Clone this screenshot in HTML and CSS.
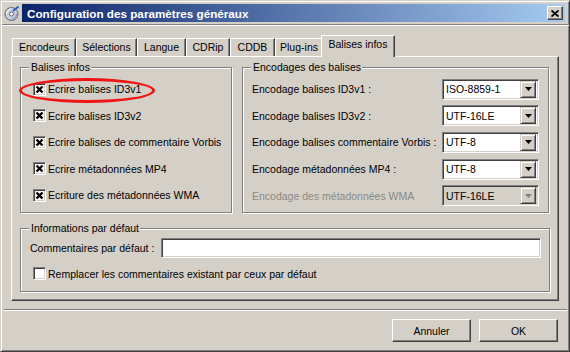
FILE: index.html
```html
<!DOCTYPE html>
<html lang="fr">
<head>
    <meta charset="UTF-8">
    <title>Configuration des paramètres généraux</title>
    <link rel="stylesheet" href="styles.css">
</head>
<body>
    <div class="window">
        <div class="titlebar">
            <div class="app-icon">
                <svg width="16" height="16" viewBox="0 0 16 16">
                    <circle cx="7.5" cy="9" r="6.5" fill="#c9cdd8" stroke="#5d6478"/>
                    <path d="M2.5 9a5 5 0 0 1 5-5" stroke="#ffffff" fill="none"/>
                    <path d="M12.5 9a5 5 0 0 1-5 5" stroke="#8890b0" fill="none"/>
                    <circle cx="7.5" cy="9" r="2" fill="#ffffff" stroke="#5d6478"/>
                    <path d="M9 6 L14.5 1.5" stroke="#2a5cd0" stroke-width="2"/>
                </svg>
            </div>
            <div class="caption">
                <span>Configuration des paramètres généraux</span>
                <div class="close">
                    <svg width="8" height="7" viewBox="0 0 8 7">
                        <path d="M0.5 0.5 L7.5 6.5 M7.5 0.5 L0.5 6.5" stroke="#000" stroke-width="1.8"/>
                    </svg>
                </div>
            </div>
        </div>
        <div class="rule"></div>

        <div class="main">
            <div class="tabs">
                <div class="tab tab-encoders">Encodeurs</div>
                <div class="tab tab-selections">Sélections</div>
                <div class="tab tab-language">Langue</div>
                <div class="tab tab-cdrip">CDRip</div>
                <div class="tab tab-cddb">CDDB</div>
                <div class="tab tab-plugins">Plug-ins</div>
                <div class="tab tab-tags active">Balises infos</div>
            </div>

            <div class="panel">
                <div class="top-row">
                    <div class="group group-tags">
                        <span class="legend">Balises infos</span>
                        <div class="check-list">
                            <div class="check"><span class="box checked"></span>Ecrire balises ID3v1</div>
                            <div class="check"><span class="box checked"></span>Ecrire balises ID3v2</div>
                            <div class="check"><span class="box checked"></span>Ecrire balises de commentaire Vorbis</div>
                            <div class="check"><span class="box checked"></span>Ecrire métadonnées MP4</div>
                            <div class="check"><span class="box checked"></span>Ecriture des métadonnées WMA</div>
                        </div>
                        <span class="highlight"></span>
                    </div>

                    <div class="group group-enc">
                        <span class="legend">Encodages des balises</span>
                        <div class="enc-list">
                            <div class="enc-row">
                                <span>Encodage balises ID3v1 :</span>
                                <div class="combo"><span class="combo-value">ISO-8859-1</span><span class="combo-btn"></span></div>
                            </div>
                            <div class="enc-row">
                                <span>Encodage balises ID3v2 :</span>
                                <div class="combo"><span class="combo-value">UTF-16LE</span><span class="combo-btn"></span></div>
                            </div>
                            <div class="enc-row">
                                <span>Encodage balises commentaire Vorbis :</span>
                                <div class="combo"><span class="combo-value">UTF-8</span><span class="combo-btn"></span></div>
                            </div>
                            <div class="enc-row">
                                <span>Encodage métadonnées MP4 :</span>
                                <div class="combo"><span class="combo-value">UTF-8</span><span class="combo-btn"></span></div>
                            </div>
                            <div class="enc-row disabled">
                                <span>Encodage des métadonnées WMA</span>
                                <div class="combo"><span class="combo-value">UTF-16LE</span><span class="combo-btn"></span></div>
                            </div>
                        </div>
                    </div>
                </div>

                <div class="group group-defaults">
                    <span class="legend">Informations par défaut</span>
                    <div class="field-row">
                        <span class="field-label">Commentaires par défaut :</span>
                        <div class="text-input"></div>
                    </div>
                    <div class="check"><span class="box"></span>Remplacer les commentaires existant par ceux par défaut</div>
                </div>
            </div>
        </div>

        <div class="separator"></div>

        <div class="buttons">
            <div class="button">Annuler</div>
            <div class="button">OK</div>
        </div>
    </div>
</body>
</html>
```

FILE: styles.css
```css
* {
    box-sizing: border-box;
}

body {
    margin: 0;
    font-family: "Liberation Sans", Arial, sans-serif;
    font-size: 10.5px;
    color: #000;
    background-color: #d4d0c8;
}

.window {
    width: 570px;
    height: 352px;
    border: 1px solid;
    border-color: #d4d0c8 #404040 #404040 #d4d0c8;
    box-shadow: inset 1px 1px #fff, inset -1px -1px #808080;
    display: flex;
    flex-direction: column;
}

/* title bar */
.titlebar {
    display: flex;
    height: 18px;
    margin: 3px 4px 0 1px;
}

.app-icon {
    width: 20px;
    display: flex;
    align-items: center;
    justify-content: center;
}

.caption {
    flex: 1;
    display: flex;
    align-items: center;
    justify-content: space-between;
    padding: 0 2px 0 5px;
    background: linear-gradient(to right, #0a246a, #a6caf0);
    color: #fff;
    font-weight: bold;
    font-size: 11.7px;
}

.close {
    width: 16px;
    height: 14px;
    display: flex;
    align-items: center;
    justify-content: center;
    background-color: #d4d0c8;
    border: 1px solid;
    border-color: #fff #404040 #404040 #fff;
    box-shadow: inset -1px -1px #808080;
}

.rule {
    margin: 2px 0 0 1px;
    border-top: 1px solid #808080;
    border-bottom: 1px solid #fff;
}

/* tabs */
.main {
    margin: 9px 10px 0 10px;
}

.tabs {
    display: flex;
    align-items: flex-end;
    height: 21px;
    padding-left: 1px;
}

.tab {
    height: 18px;
    line-height: 16px;
    text-align: center;
    white-space: nowrap;
    border: 1px solid;
    border-bottom: 0;
    border-color: #fff #404040 transparent #fff;
    box-shadow: inset -1px 0 #808080;
}

.tab-encoders { width: 64px; }
.tab-selections { width: 61px; }
.tab-language { width: 49px; }
.tab-cdrip { width: 44px; }
.tab-cddb { width: 45px; }
.tab-plugins { width: 48px; }
.tab-tags { width: 74px; }

.tab.active {
    position: relative;
    z-index: 2;
    height: 22px;
    margin: 0 -2px -1px -2px;
    background-color: #d4d0c8;
}

.panel {
    height: 245px;
    padding: 10px 8px 0 8px;
    border: 1px solid;
    border-color: #fff #404040 #404040 #fff;
    box-shadow: inset -1px -1px #808080;
}

/* group boxes */
.top-row {
    display: flex;
    gap: 10px;
    height: 146px;
}

.group {
    position: relative;
    border: 1px solid #808080;
    box-shadow: inset 1px 1px #fff, 1px 1px #fff;
}

.group-tags {
    width: 212px;
}

.group-enc {
    width: 307px;
}

.group-defaults {
    height: 64px;
    margin-top: 15px;
    padding-top: 8px;
}

.legend {
    position: absolute;
    top: -7px;
    left: 8px;
    padding: 0 1px 0 2px;
    line-height: 13px;
    background-color: #d4d0c8;
}

.highlight {
    position: absolute;
    left: -2px;
    top: 10px;
    width: 136px;
    height: 25px;
    border: 3px solid #f01414;
    border-radius: 50%;
}

.check-list {
    padding-top: 8px;
}

.check {
    display: flex;
    align-items: center;
    gap: 2px;
    height: 26.5px;
    padding-left: 12px;
    white-space: nowrap;
}

.box {
    width: 13px;
    height: 13px;
    background-color: #fff;
    border: 1px solid;
    border-color: #808080 #fff #fff #808080;
    box-shadow: inset 1px 1px #404040, inset -1px -1px #d4d0c8;
}

.box.checked {
    background: #fff url("data:image/svg+xml,%3Csvg xmlns='http://www.w3.org/2000/svg' width='11' height='11' viewBox='0 0 11 11'%3E%3Cpath d='M2.5 2.5 L8.5 8.5 M8.5 2.5 L2.5 8.5' stroke='%23000' stroke-width='2.4'/%3E%3C/svg%3E") no-repeat center;
}

/* encodings */
.enc-list {
    padding: 8px 9px 0 9px;
}

.enc-row {
    display: flex;
    align-items: center;
    justify-content: space-between;
    height: 26.6px;
    white-space: nowrap;
}

.combo {
    width: 97px;
    height: 21px;
    display: flex;
    align-items: center;
    padding: 2px;
    background-color: #fff;
    border: 1px solid;
    border-color: #808080 #fff #fff #808080;
    box-shadow: inset 1px 1px #404040, inset -1px -1px #d4d0c8;
}

.combo-value {
    flex: 1;
    padding-left: 1px;
}

.combo-btn {
    width: 16px;
    height: 17px;
    background: #d4d0c8 url("data:image/svg+xml,%3Csvg xmlns='http://www.w3.org/2000/svg' width='7' height='4'%3E%3Cpolygon points='0,0 7,0 3.5,4' fill='%23000'/%3E%3C/svg%3E") no-repeat center;
    border: 1px solid;
    border-color: #d4d0c8 #404040 #404040 #d4d0c8;
    box-shadow: inset 1px 1px #fff, inset -1px -1px #808080;
}

.enc-row.disabled > span {
    color: #8d8a84;
}

.enc-row.disabled .combo {
    background-color: #d4d0c8;
}

.enc-row.disabled .combo-btn {
    background-image: url("data:image/svg+xml,%3Csvg xmlns='http://www.w3.org/2000/svg' width='7' height='4'%3E%3Cpolygon points='0,0 7,0 3.5,4' fill='%23808080'/%3E%3C/svg%3E");
}

/* defaults */
.field-row {
    display: flex;
    align-items: center;
    height: 21px;
    padding: 0 8px 0 9px;
    margin-bottom: 5px;
}

.field-label {
    width: 131px;
}

.text-input {
    flex: 1;
    height: 20px;
    background-color: #fff;
    border: 1px solid;
    border-color: #808080 #fff #fff #808080;
    box-shadow: inset 1px 1px #404040, inset -1px -1px #d4d0c8;
}

.group-defaults .check {
    height: 21px;
}

/* bottom buttons */
.separator {
    margin: 8px 2px 0 3px;
    border-top: 1px solid #808080;
    border-bottom: 1px solid #fff;
}

.buttons {
    display: flex;
    justify-content: flex-end;
    gap: 8px;
    margin: 8px 11px 0 0;
}

.button {
    width: 79px;
    height: 23px;
    display: flex;
    align-items: center;
    justify-content: center;
    border: 1px solid;
    border-color: #fff #404040 #404040 #fff;
    box-shadow: inset -1px -1px #808080;
}
```
